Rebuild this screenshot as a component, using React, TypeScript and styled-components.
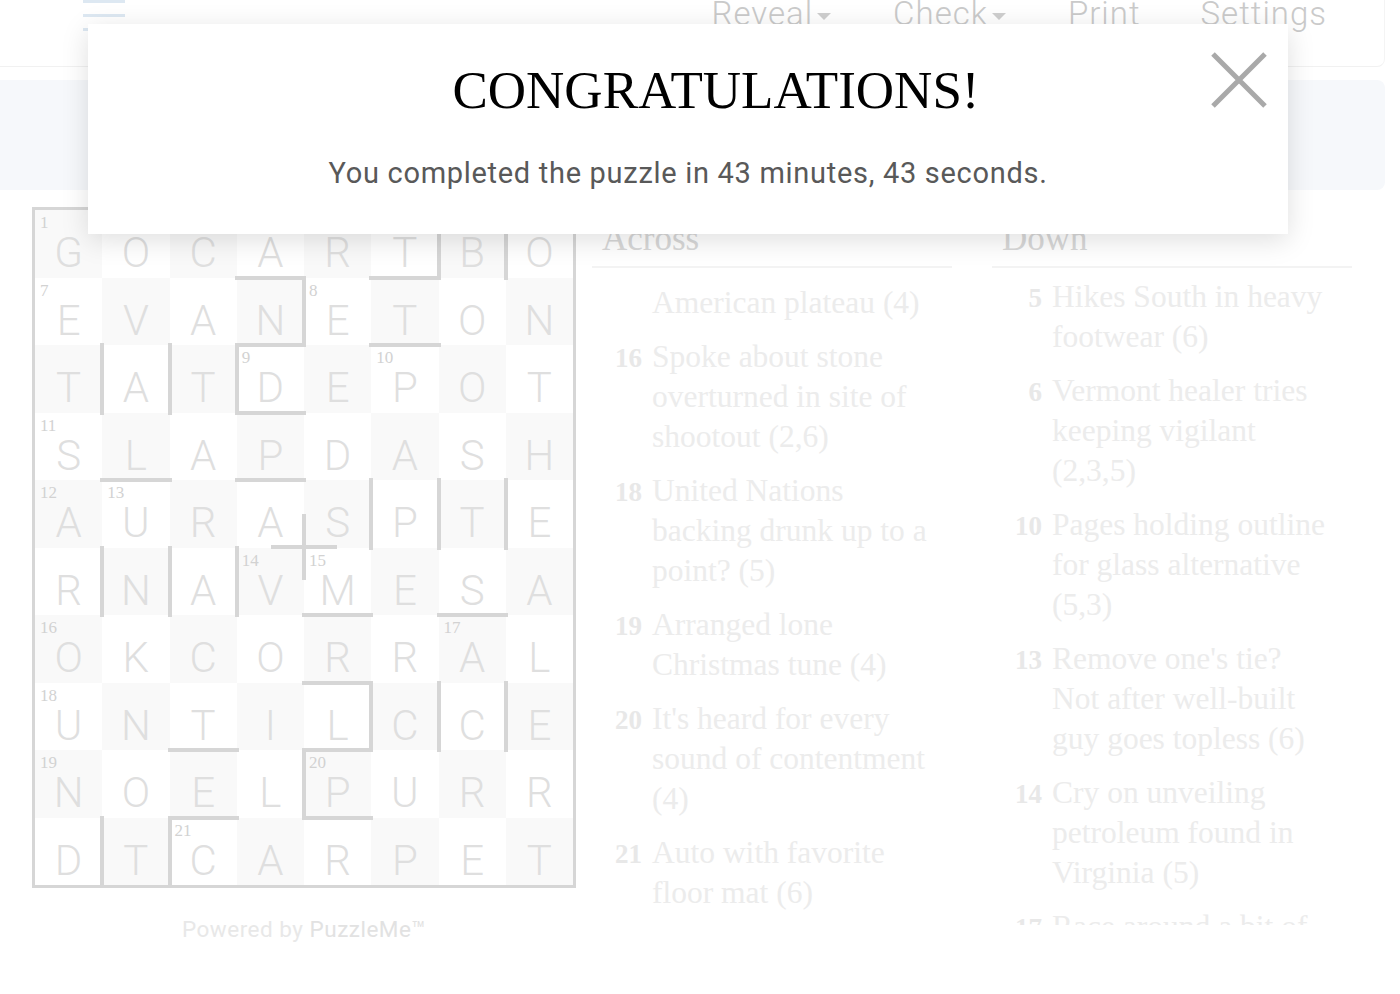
import React from "react";
import styled, { createGlobalStyle } from "styled-components";

const GlobalStyle = createGlobalStyle`
  * { box-sizing: border-box; }
  html, body { margin: 0; padding: 0; background: #fff; overflow: hidden; }
  body { font-family: Roboto, "Liberation Sans", sans-serif; }
`;

const Page = styled.div`
  position: relative;
  width: 1400px;
  height: 994px;
  overflow: hidden;
  background: #fff;
`;

const Content = styled.div`
  width: 1385px;
`;

const Header = styled.header`
  display: flex;
  align-items: flex-start;
  height: 67px;
  border-bottom: 1px solid #f1f1f1;
  border-right: 1px solid #f4f4f4;
  border-bottom-right-radius: 8px;
`;

const Hamburger = styled.div`
  display: flex;
  flex-direction: column;
  gap: 11px;
  width: 42px;
  margin-left: 83px;
  margin-top: 0;
`;

const HamburgerLine = styled.span`
  display: block;
  height: 3px;
  background: #dde8f2;
`;

const Menu = styled.nav`
  display: flex;
  align-items: center;
  gap: 60px;
  margin-left: auto;
  margin-right: 57px;
  margin-top: -3px;
`;

const MenuItem = styled.span`
  display: flex;
  align-items: center;
  font-family: Roboto, sans-serif;
  font-weight: 300;
  font-size: 33px;
  line-height: 33px;
  letter-spacing: 1px;
  color: #cacaca;
`;

const Caret = styled.span`
  width: 0;
  height: 0;
  margin-left: 4px;
  margin-right: 2px;
  margin-top: 5px;
  border-left: 7px solid transparent;
  border-right: 7px solid transparent;
  border-top: 7px solid #cfcfcf;
`;

const ClueBar = styled.div`
  height: 110px;
  margin-top: 13px;
  background: #f6f8fb;
  border-top-right-radius: 8px;
  border-bottom-right-radius: 8px;
`;

const Main = styled.main`
  display: flex;
  align-items: flex-start;
  gap: 16px;
  padding-left: 32px;
  margin-top: 17px;
`;

const GridColumn = styled.div`
  display: flex;
  flex-direction: column;
  align-items: center;
`;

const GridFrame = styled.div`
  position: relative;
  z-index: 0;
  display: grid;
  grid-template-columns: repeat(8, 67.25px);
  grid-auto-rows: 67.5px;
  border: 3px solid #d6d6d6;
`;

const Cell = styled.div<{ $shade: boolean; $r: boolean; $b: boolean }>`
  position: relative;
  display: flex;
  justify-content: center;
  align-items: center;
  padding-top: 19px;
  background: ${(p) => (p.$shade ? "#f9f9f9" : "#ffffff")};

  &::after {
    content: "";
    display: ${(p) => (p.$r ? "block" : "none")};
    position: absolute;
    z-index: 1;
    top: -2px;
    bottom: -2px;
    right: -2px;
    width: 4px;
    background: #d6d6d6;
  }

  &::before {
    content: "";
    display: ${(p) => (p.$b ? "block" : "none")};
    position: absolute;
    z-index: 1;
    left: -2px;
    right: -2px;
    bottom: -2px;
    height: 4px;
    background: #d6d6d6;
  }
`;

const Letter = styled.span`
  font-family: Roboto, sans-serif;
  font-weight: 300;
  font-size: 42px;
  line-height: 1;
  color: #dfdfdf;
`;

const CellNumber = styled.span`
  position: absolute;
  top: 4px;
  left: 5px;
  font-family: "Liberation Serif", serif;
  font-size: 17px;
  line-height: 1;
  color: #d2d2d2;
`;

/* the bar cross that sits on a cell corner */
const Cross = styled.div`
  position: absolute;
  z-index: 2;
  left: 236px;
  top: 304px;
  width: 66px;
  height: 66px;

  &::before,
  &::after {
    content: "";
    position: absolute;
    background: #d6d6d6;
  }
  &::before {
    left: 31px;
    top: 0;
    width: 4px;
    height: 66px;
  }
  &::after {
    top: 31px;
    left: 0;
    height: 4px;
    width: 66px;
  }
`;

const Powered = styled.div`
  margin-top: 28px;
  font-family: Roboto, sans-serif;
  font-size: 22.5px;
  line-height: 26px;
  letter-spacing: 0.5px;
  color: #e8e8e8;
`;

const PoweredLink = styled.span`
  color: #e2e2e2;
`;

const Clues = styled.div`
  display: flex;
  gap: 40px;
`;

const ClueColumn = styled.section`
  width: 360px;
`;

const ClueHeading = styled.h2`
  margin: 0;
  height: 61px;
  padding: 12px 0 0 10px;
  font-family: "Liberation Serif", serif;
  font-weight: 400;
  font-size: 35px;
  line-height: 40px;
  color: #d8d8d8;
  border-bottom: 2px solid #f3f3f3;
`;

const ClueList = styled.div<{ $offset: number }>`
  height: 657px;
  overflow: hidden;
  padding-top: ${(p) => p.$offset}px;
`;

const ClueRow = styled.div`
  display: flex;
  align-items: baseline;
  gap: 10px;
  margin-bottom: 14px;
`;

const ClueNum = styled.span`
  flex: 0 0 50px;
  text-align: right;
  font-family: "Liberation Serif", serif;
  font-weight: 700;
  font-size: 27px;
  color: #e8e8e8;
`;

const ClueText = styled.div`
  font-family: "Liberation Serif", serif;
  font-size: 31.5px;
  line-height: 40px;
  color: #ececec;
  white-space: nowrap;
`;

const ClueLine = styled.span`
  display: block;
`;

const Modal = styled.div`
  position: absolute;
  top: 24px;
  left: 88px;
  width: 1200px;
  height: 210px;
  background: #fff;
  box-shadow: 0 6px 26px rgba(0, 0, 0, 0.13);
  display: flex;
  flex-direction: column;
  align-items: center;
  padding-top: 36px;
`;

const ModalTitle = styled.h1`
  margin: 0;
  padding-left: 56px;
  font-family: "Liberation Serif", serif;
  font-weight: 400;
  font-size: 53px;
  line-height: 60px;
  color: #000;
`;

const ModalText = styled.p`
  margin: 35px 0 0;
  font-family: Roboto, sans-serif;
  font-size: 29px;
  line-height: 36px;
  letter-spacing: 0.7px;
  color: #595959;
`;

const CloseButton = styled.button`
  position: absolute;
  top: 27px;
  right: 20px;
  width: 58px;
  height: 58px;
  padding: 0;
  border: none;
  background: none;
`;

const grid = [
  "GOCARTBO",
  "EVANETON",
  "TATDEPOT",
  "SLAPDASH",
  "AURASPTE",
  "RNAVMESA",
  "OKCORRAL",
  "UNTILCCE",
  "NOELPURR",
  "DTCARPET",
];

const numbers: Record<string, number> = {
  "0,0": 1, "1,0": 7, "1,4": 8, "2,3": 9, "2,5": 10, "3,0": 11, "4,0": 12, "4,1": 13,
  "5,3": 14, "5,4": 15, "6,0": 16, "6,6": 17, "7,0": 18, "8,0": 19, "8,4": 20, "9,2": 21,
};

const rightBars = new Set([
  "0,5", "0,6", "1,3", "2,0", "2,1", "2,2", "4,4", "4,5", "4,6",
  "5,0", "5,1", "5,2", "7,4", "7,5", "7,6", "8,3", "9,0", "9,1",
]);
const bottomBars = new Set([
  "0,3", "0,5", "1,3", "1,5", "2,3", "3,1", "3,3", "5,4", "5,6", "6,4", "7,2", "7,4", "8,2", "8,4",
]);

interface Clue {
  n: string;
  lines: string[];
}

const across: Clue[] = [
  { n: "", lines: ["American plateau (4)"] },
  { n: "16", lines: ["Spoke about stone", "overturned in site of", "shootout (2,6)"] },
  { n: "18", lines: ["United Nations", "backing drunk up to a", "point? (5)"] },
  { n: "19", lines: ["Arranged lone", "Christmas tune (4)"] },
  { n: "20", lines: ["It's heard for every", "sound of contentment", "(4)"] },
  { n: "21", lines: ["Auto with favorite", "floor mat (6)"] },
];

const down: Clue[] = [
  { n: "5", lines: ["Hikes South in heavy", "footwear (6)"] },
  { n: "6", lines: ["Vermont healer tries", "keeping vigilant", "(2,3,5)"] },
  { n: "10", lines: ["Pages holding outline", "for glass alternative", "(5,3)"] },
  { n: "13", lines: ["Remove one's tie?", "Not after well-built", "guy goes topless (6)"] },
  { n: "14", lines: ["Cry on unveiling", "petroleum found in", "Virginia (5)"] },
  { n: "17", lines: ["Race around a bit of", "land (4)"] },
];

const ClueBlock = ({ title, clues, offset }: { title: string; clues: Clue[]; offset: number }) => (
  <ClueColumn>
    <ClueHeading>{title}</ClueHeading>
    <ClueList $offset={offset}>
      {clues.map((c, i) => (
        <ClueRow key={i}>
          <ClueNum>{c.n}</ClueNum>
          <ClueText>
            {c.lines.map((l) => (
              <ClueLine key={l}>{l}</ClueLine>
            ))}
          </ClueText>
        </ClueRow>
      ))}
    </ClueList>
  </ClueColumn>
);

export default function App() {
  return (
    <Page>
      <GlobalStyle />
      <Content>
        <Header>
          <Hamburger>
            <HamburgerLine />
            <HamburgerLine />
            <HamburgerLine />
          </Hamburger>
          <Menu>
            <MenuItem>
              Reveal
              <Caret />
            </MenuItem>
            <MenuItem>
              Check
              <Caret />
            </MenuItem>
            <MenuItem>Print</MenuItem>
            <MenuItem>Settings</MenuItem>
          </Menu>
        </Header>
        <ClueBar />
        <Main>
          <GridColumn>
            <GridFrame>
              {grid.map((row, r) =>
                row.split("").map((ch, c) => {
                  const key = `${r},${c}`;
                  return (
                    <Cell key={key} $shade={(r + c) % 2 === 0} $r={rightBars.has(key)} $b={bottomBars.has(key)}>
                      {numbers[key] && <CellNumber>{numbers[key]}</CellNumber>}
                      <Letter>{ch}</Letter>
                    </Cell>
                  );
                })
              )}
              <Cross />
            </GridFrame>
            <Powered>
              Powered by <PoweredLink>PuzzleMe™</PoweredLink>
            </Powered>
          </GridColumn>
          <Clues>
            <ClueBlock title="Across" clues={across} offset={15} />
            <ClueBlock title="Down" clues={down} offset={9} />
          </Clues>
        </Main>
      </Content>

      <Modal>
        <ModalTitle>CONGRATULATIONS!</ModalTitle>
        <ModalText>You completed the puzzle in 43 minutes, 43 seconds.</ModalText>
        <CloseButton aria-label="Close">
          <svg width="58" height="58" viewBox="0 0 58 58">
            <path d="M3 3 L55 55 M55 3 L3 55" stroke="#a9a9a9" strokeWidth="5" fill="none" />
          </svg>
        </CloseButton>
      </Modal>
    </Page>
  );
}
